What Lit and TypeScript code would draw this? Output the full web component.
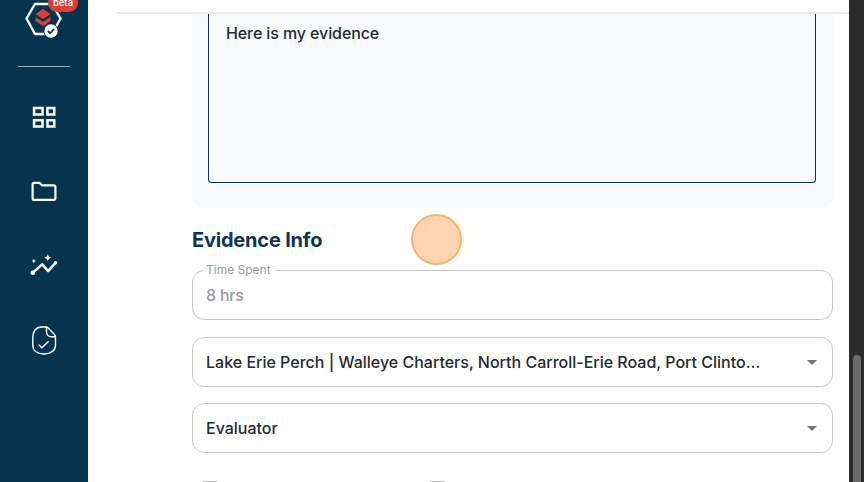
import { LitElement, html, css } from "lit";
import { customElement } from "lit/decorators.js";

@customElement("app-root")
export class AppRoot extends LitElement {
  static styles = css`
    :host {
      display: grid;
      grid-template-columns: 88px 1fr 15px;
      width: 864px;
      height: 482px;
      overflow: hidden;
      position: relative;
      background: #fff;
      font-family: "Inter", "Liberation Sans", sans-serif;
      color: #222b30;
    }
    .side {
      background: #06344f;
      display: flex;
      flex-direction: column;
      align-items: center;
      position: relative;
      overflow: hidden;
      padding-right: 1px;
    }
    .logo { display: block; width: 87px; height: 66px; flex: none; }
    .badge {
      position: absolute;
      left: 48px;
      top: -6px;
      width: 30px;
      height: 18px;
      border-radius: 9px;
      background: #dc3f3a;
      color: #fff;
      font-size: 9.500px;
      font-weight: 500;
      line-height: 18px;
      text-align: center;
    }
    .rule { width: 52px; height: 1px; background: #9fb3bf; flex: none; }
    .nav { display: flex; flex-direction: column; margin-top: 13px; }
    .nav div { height: 74.6px; display: flex; align-items: center; justify-content: center; }
    .nav svg { display: block; width: 30px; height: 30px; fill: none; stroke: #fff; stroke-linejoin: round; stroke-linecap: round; }
    .main { display: flex; flex-direction: column; min-width: 0; overflow: hidden; }
    .top { height: 12px; flex: none; margin-left: 29px; border-bottom: 2px solid #e8e8e8; }
    .content { padding: 0 16px 0 104px; display: flex; flex-direction: column; }
    .card {
      background: #f7f9fb;
      border-radius: 0 0 12px 12px;
      padding: 0 17px 25px 16px;
    }
    .area {
      height: 169px;
      box-sizing: border-box;
      border: 1px solid #0a3350;
      border-top: none;
      border-radius: 0 0 4px 4px;
      padding: 9px 17px 0;
      font-size: 16px;
      line-height: 20px;
      font-weight: 500;
      letter-spacing: -0.1px;
    }
    h2 {
      margin: 21px 0 0;
      font-size: 20px;
      line-height: 22px;
      font-weight: 700;
      letter-spacing: -0.2px;
      color: #0b3552;
    }
    fieldset {
      margin: 12px 0 0;
      padding: 0 13px;
      height: 57px;
      box-sizing: border-box;
      border: 1px solid #c8c8c8;
      border-radius: 12px;
      min-width: 0;
    }
    legend {
      padding: 0 4px 0 3px;
      margin-left: -3px;
      font-size: 12px;
      line-height: 14px;
      color: #9a9a9a;
    }
    .val { font-size: 16px; line-height: 20px; color: #9a9a9a; margin-top: 8px; font-weight: 500; letter-spacing: -0.2px; }
    .sel {
      margin-top: 17px;
      height: 50px;
      box-sizing: border-box;
      border: 1px solid #c8c8c8;
      border-radius: 12px;
      padding: 0 15px 0 13px;
      display: flex;
      align-items: center;
      font-size: 16px;
      font-weight: 500;
    }
    .sel + .sel { margin-top: 16px; }
    .sel span { white-space: nowrap; }
    .sel i { margin-left: auto; width: 0; height: 0; border: 5.5px solid transparent; border-top: 5px solid #757575; border-bottom: none; }
    .checks { display: flex; margin-top: 28px; padding-left: 9px; gap: 209px; }
    .checks b { width: 16px; height: 16px; flex: none; border: 1px solid #b8b8b8; border-radius: 3px; }
    .bar { background: #2b2b2b; padding: 355px 3px 0 4px; }
    .bar div { height: 140px; background: #6b6b6b; border-radius: 4px; }
    .pointer {
      position: absolute;
      left: 411px;
      top: 214px;
      width: 51px;
      height: 51px;
      box-sizing: border-box;
      border-radius: 50%;
      background: #fed6b3;
      border: 2px solid #f9b26f;
    }
  `;

  render() {
    return html`
      <aside class="side">
        <svg class="logo" viewBox="0 0 87 66" fill="none">
          <path d="M35 4h17l8.500 14.500-8.500 15.500H35l-8.500-15.500z" stroke="#fff" stroke-width="2.400" stroke-linejoin="round"/>
          <path d="M43 9l7.500 5-7.500 5-7.500-5z" fill="#dc3f3a"/>
          <path d="M35.500 17l7.500 5 7.500-5v4l-7.500 5-7.500-5z" fill="#dc3f3a"/>
          <circle cx="51" cy="31" r="7.500" fill="#06344f"/>
          <circle cx="51" cy="31" r="6.700" fill="#fff"/>
          <path d="M47.800 31l2.300 2.300 4-4.300" stroke="#06344f" stroke-width="1.800"/>
        </svg>
        <div class="badge">beta</div>
        <div class="rule"></div>
        <nav class="nav">
          <div><svg viewBox="0 0 30 30">
            <path d="M5.050 5.950h8.500v6.500h-8.500zM18.450 5.950h6.800v6.500h-6.800zM5.050 18.250h8.500v6.200h-8.500zM18.450 18.250h6.800v6.200h-6.800z" stroke-width="2.500" stroke-linejoin="miter"/>
          </svg></div>
          <div><svg viewBox="0 0 30 30">
            <path d="M3.600 7.300a1.500 1.500 0 0 1 1.500-1.500h5.500l2.500 2.600h11.800a1.500 1.500 0 0 1 1.500 1.500v11.500a1.500 1.500 0 0 1-1.500 1.500H5.100a1.500 1.500 0 0 1-1.500-1.500z" stroke-width="2.200"/>
          </svg></div>
          <div><svg viewBox="0 0 30 30">
            <path d="M3.800 21.700l9.400-8.300 6 6.700 7.300-8.400" stroke-width="2.500"/>
            <circle cx="3.800" cy="21.700" r="2.300" fill="#fff" stroke="none"/>
            <circle cx="26.500" cy="11.700" r="1.800" fill="#fff" stroke="none"/>
            <path d="M4.800 7.800q.3 2 2.200 2.300-1.900.3-2.200 2.300-.3-2-2.200-2.300 1.900-.3 2.200-2.300z" fill="#fff" stroke="none"/>
            <path d="M18.800 3q.5 3.200 3.700 3.700-3.200.5-3.700 3.700-.5-3.200-3.700-3.700 3.200-.5 3.700-3.700z" fill="#fff" stroke="none"/>
          </svg></div>
          <div><svg viewBox="0 0 30 30">
            <path d="M12.500 1h4.300c.9 0 1.700.3 2.400 1l6.300 6.500c.7.700 1 1.600 1 2.500v8c0 5.500-4.500 9-11.500 9S3.800 24.500 3.800 19v-7.500C3.800 5.500 7 1 12.500 1z" stroke-width="1.400"/>
            <path d="M17.500 1.200v4.300c0 3 2 5.300 5 5.300h3.800" stroke-width="1.400"/>
            <path d="M10 19l2.800 2.800 6.400-6" stroke-width="1.400"/>
          </svg></div>
        </nav>
      </aside>
      <main class="main">
        <div class="top"></div>
        <div class="content">
          <section class="card">
            <div class="area">Here is my evidence</div>
          </section>
          <h2>Evidence Info</h2>
          <fieldset>
            <legend>Time Spent</legend>
            <div class="val">8 hrs</div>
          </fieldset>
          <div class="sel"><span>Lake Erie Perch | Walleye Charters, North Carroll-Erie Road, Port Clinto…</span><i></i></div>
          <div class="sel"><span>Evaluator</span><i></i></div>
          <div class="checks"><b></b><b></b></div>
        </div>
      </main>
      <div class="bar"><div></div></div>
      <div class="pointer"></div>
    `;
  }
}
